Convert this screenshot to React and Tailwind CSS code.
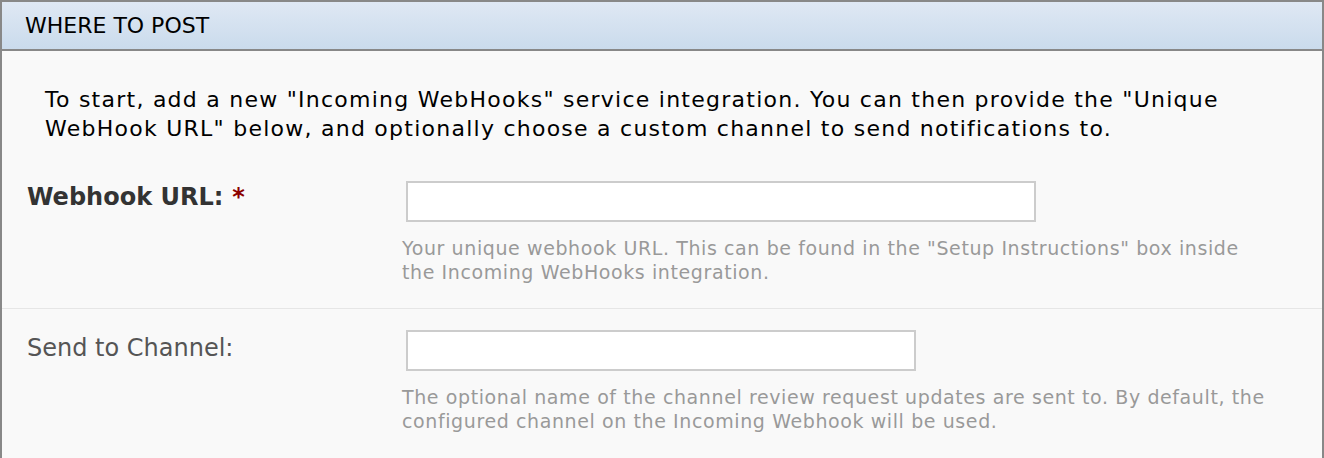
import React from "react";

const FONT = { fontFamily: '"DejaVu Sans", Verdana, sans-serif' };

function Field({ label, required, inputWidth, help, labelClass }) {
  return (
    <div className="flex pl-[25px] pr-[54px]">
      <div className={`w-[375px] shrink-0 ${labelClass}`}>
        {label}
        {required && <span className="ml-[9px] text-[#8b0000] font-bold">*</span>}
      </div>
      <div className="flex-1">
        <input
          type="text"
          className={`ml-[4px] block h-[41px] border-2 border-[#cccccc] bg-white ${inputWidth}`}
        />
        <p className="mt-[14px] text-[19px] leading-[24px] tracking-[0.6px] text-[#999999]">{help}</p>
      </div>
    </div>
  );
}

export default function App() {
  return (
    <div style={FONT} className="h-[458px] w-full overflow-hidden border-x-2 border-t-2 border-[#888888] bg-[#f9f9f9]">
      <div className="flex h-[49px] items-center border-b-2 border-[#888888] bg-gradient-to-b from-[#dfe8f4] to-[#cadbec] px-[23px] text-[22px] text-black">
        WHERE TO POST
      </div>

      <p className="mt-[34px] pl-[43px] pr-[50px] text-[22px] leading-[29px] tracking-[1.25px] text-black">
        To start, add a new "Incoming WebHooks" service integration. You can then provide the "Unique
        WebHook URL" below, and optionally choose a custom channel to send notifications to.
      </p>

      <div className="mt-[17px] border-b border-[#e6e6e6] pt-[21px] pb-[24px]">
        <Field
          label="Webhook URL:"
          required
          inputWidth="w-[630px]"
          labelClass="text-[24px] font-bold leading-[32px] text-[#333333]"
          help={'Your unique webhook URL. This can be found in the "Setup Instructions" box inside the Incoming WebHooks integration.'}
        />
      </div>

      <div className="pt-[21px]">
        <Field
          label="Send to Channel:"
          inputWidth="w-[510px]"
          labelClass="text-[24px] leading-[36px] text-[#555555]"
          help="The optional name of the channel review request updates are sent to. By default, the configured channel on the Incoming Webhook will be used."
        />
      </div>
    </div>
  );
}
